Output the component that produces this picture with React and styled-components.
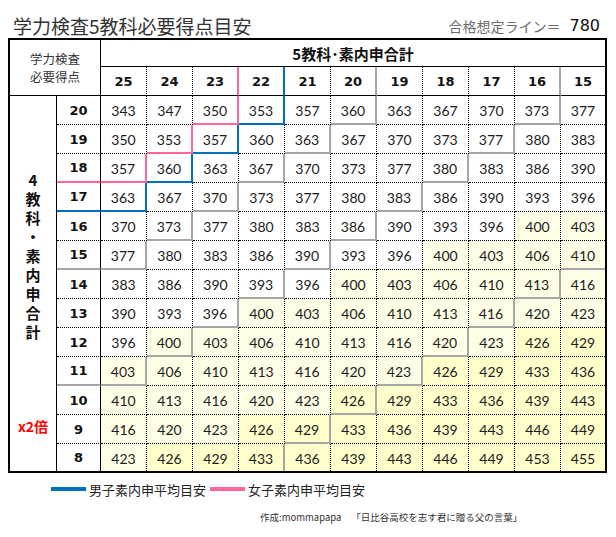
import React from "react";
import styled, { createGlobalStyle } from "styled-components";

const BLUE = "#0070c0";
const PINK = "#ff6699";
const GRAY = "#a6a6a6";
const DOT = "1px dotted #000";
const SOLID = "1px solid #000";
const stroke = (color) => `2px solid ${color}`;

const colNums = [25, 24, 23, 22, 21, 20, 19, 18, 17, 16, 15];
const rowNums = [20, 19, 18, 17, 16, 15, 14, 13, 12, 11, 10, 9, 8];

const values = [
    [343, 347, 350, 353, 357, 360, 363, 367, 370, 373, 377],
    [350, 353, 357, 360, 363, 367, 370, 373, 377, 380, 383],
    [357, 360, 363, 367, 370, 373, 377, 380, 383, 386, 390],
    [363, 367, 370, 373, 377, 380, 383, 386, 390, 393, 396],
    [370, 373, 377, 380, 383, 386, 390, 393, 396, 400, 403],
    [377, 380, 383, 386, 390, 393, 396, 400, 403, 406, 410],
    [383, 386, 390, 393, 396, 400, 403, 406, 410, 413, 416],
    [390, 393, 396, 400, 403, 406, 410, 413, 416, 420, 423],
    [396, 400, 403, 406, 410, 413, 416, 420, 423, 426, 429],
    [403, 406, 410, 413, 416, 420, 423, 426, 429, 433, 436],
    [410, 413, 416, 420, 423, 426, 429, 433, 436, 439, 443],
    [416, 420, 423, 426, 429, 433, 436, 439, 443, 446, 449],
    [423, 426, 429, 433, 436, 439, 443, 446, 449, 453, 455],
];

// step lines: every cell with row + col === sum gets a right and bottom edge
const stairs = [
    { sum: 2, color: PINK },
    { sum: 3, color: BLUE },
    { sum: 5, color: GRAY },
    { sum: 9, color: GRAY },
    { sum: 15, color: GRAY },
];

const LAST_COL = colNums.length - 1;
const LAST_ROW = rowNums.length - 1;

const stairAt = (sum) => stairs.find((s) => s.sum === sum);

const cellEdges = (r, c) => {
    let right = DOT;
    let bottom = DOT;
    const hit = stairAt(r + c);
    if (hit) {
        right = stroke(hit.color);
        bottom = stroke(hit.color);
    }
    if (c === LAST_COL) right = "none";
    if (r === LAST_ROW) bottom = "none";
    return { right, bottom };
};

const rowHeadBottom = (r) => {
    if (r === LAST_ROW) return "none";
    const hit = stairAt(r);
    return hit ? stroke(hit.color) : DOT;
};

const colHeadRight = (c) => {
    if (c === LAST_COL) return "none";
    const hit = stairAt(c);
    return hit ? stroke(hit.color) : DOT;
};

const shade = (v) => (v >= 426 ? "#ffffcc" : v >= 400 ? "#fefee6" : "#ffffff");

const GlobalStyle = createGlobalStyle`
    body {
        margin: 0;
        background: #fff;
        font-family: "Lato", "Noto Sans CJK JP", sans-serif;
        color: #222;
    }
`;

const Page = styled.div`
    padding-left: 8px;
`;

const TopBar = styled.div`
    width: 599px;
    height: 38px;
    box-sizing: border-box;
    padding: 14px 7px 0 5px;
    display: flex;
    align-items: center;
    justify-content: space-between;
`;

const Title = styled.h1`
    margin: 0;
    font-family: "Noto Sans CJK JP", sans-serif;
    font-size: 19px;
    font-weight: 400;
    line-height: 22px;
    color: #333;
`;

const PassLine = styled.div`
    display: flex;
    align-items: center;
    line-height: 20px;
    font-family: "Noto Sans CJK JP", sans-serif;
    font-size: 14px;
    color: #6b6b6b;

    b {
        margin-left: 9px;
        font-family: "DejaVu Sans", sans-serif;
        font-size: 16px;
        font-weight: 400;
        color: #111;
    }
`;

const Sheet = styled.div`
    display: grid;
    grid-template-columns: 47px 44px repeat(10, 46px) 44px;
    grid-template-rows: 27px 29px repeat(12, 29px) 27px;
    width: fit-content;
    border: 2px solid #000;
`;

const Cell = styled.div`
    box-sizing: border-box;
    display: flex;
    align-items: center;
    justify-content: center;
    border-right: ${(p) => p.$right || DOT};
    border-bottom: ${(p) => p.$bottom || DOT};
    background: ${(p) => p.$bg || "#fff"};
`;

const Corner = styled(Cell)`
    grid-column: 1 / 3;
    grid-row: 1 / 3;
    flex-direction: column;
    font-family: "Noto Sans CJK JP", sans-serif;
    font-size: 12.5px;
    line-height: 18px;
    color: #333;
`;

const GroupHead = styled(Cell)`
    grid-column: 3 / -1;
    grid-row: 1;
    font-family: "Noto Sans CJK JP", sans-serif;
    font-size: 15px;
    font-weight: 700;
    color: #111;
`;

const ColHead = styled(Cell)`
    font-family: "DejaVu Sans", sans-serif;
    font-size: 13px;
    font-weight: 700;
    color: #111;
`;

const SideLabel = styled(Cell)`
    grid-column: 1;
    grid-row: 3 / -1;
    flex-direction: column;
    justify-content: flex-start;
    padding-top: 74px;
    font-family: "Noto Sans CJK JP", sans-serif;
    font-size: 15px;
    font-weight: 700;
    line-height: 19px;
    color: #111;

    span {
        display: block;
    }
`;

const Multiplier = styled.span`
    margin-top: 76px;
    color: #ff0000;
    font-size: 14px;
`;

const RowHead = styled(Cell)`
    font-family: "DejaVu Sans", sans-serif;
    font-size: 13px;
    font-weight: 700;
    color: #111;
`;

const Score = styled(Cell)`
    font-size: 14px;
    font-weight: 400;
    color: #1c1c1c;
    padding-top: 1px;
`;

const Legend = styled.div`
    margin-top: 6px;
    height: 20px;
    padding-left: 43px;
    display: flex;
    align-items: center;
`;

const Swatch = styled.span`
    width: 35px;
    height: 4px;
    background: ${(p) => p.$color};
`;

const LegendText = styled.span`
    margin: 0 4px 0 3px;
    font-family: "Noto Sans CJK JP", sans-serif;
    font-size: 13px;
    color: #222;
`;

const Credit = styled.div`
    margin-top: 11px;
    padding-left: 252px;
    font-family: "Noto Sans CJK JP", sans-serif;
    font-size: 9.5px;
    line-height: 14px;
    color: #333;

    .quote {
        margin-left: 10px;
    }
`;

const App = () => {
    return (
        <Page>
            <GlobalStyle />
            <TopBar>
                <Title>学力検査5教科必要得点目安</Title>
                <PassLine>
                    合格想定ライン＝<b>780</b>
                </PassLine>
            </TopBar>

            <Sheet>
                <Corner $right={SOLID} $bottom={SOLID}>
                    <span>学力検査</span>
                    <span>必要得点</span>
                </Corner>
                <GroupHead $right="none" $bottom={SOLID}>
                    5教科･素内申合計
                </GroupHead>
                <SideLabel $right={SOLID} $bottom="none">
                    {"4教科・素内申合計".split("").map((ch, i) => (
                        <span key={i}>{ch}</span>
                    ))}
                    <Multiplier>x2倍</Multiplier>
                </SideLabel>

                {colNums.map((n, c) => (
                    <ColHead key={n} $right={colHeadRight(c)} $bottom={SOLID}>
                        {n}
                    </ColHead>
                ))}

                {rowNums.map((rn, r) => (
                    <React.Fragment key={rn}>
                        <RowHead $right={SOLID} $bottom={rowHeadBottom(r)}>
                            {rn}
                        </RowHead>
                        {values[r].map((v, c) => {
                            const edges = cellEdges(r, c);
                            return (
                                <Score
                                    key={c}
                                    $right={edges.right}
                                    $bottom={edges.bottom}
                                    $bg={shade(v)}
                                >
                                    {v}
                                </Score>
                            );
                        })}
                    </React.Fragment>
                ))}
            </Sheet>

            <Legend>
                <Swatch $color={BLUE} />
                <LegendText>男子素内申平均目安</LegendText>
                <Swatch $color={PINK} />
                <LegendText>女子素内申平均目安</LegendText>
            </Legend>

            <Credit>
                作成:mommapapa
                <span className="quote">「日比谷高校を志す君に贈る父の言葉」</span>
            </Credit>
        </Page>
    );
};

export default App;
